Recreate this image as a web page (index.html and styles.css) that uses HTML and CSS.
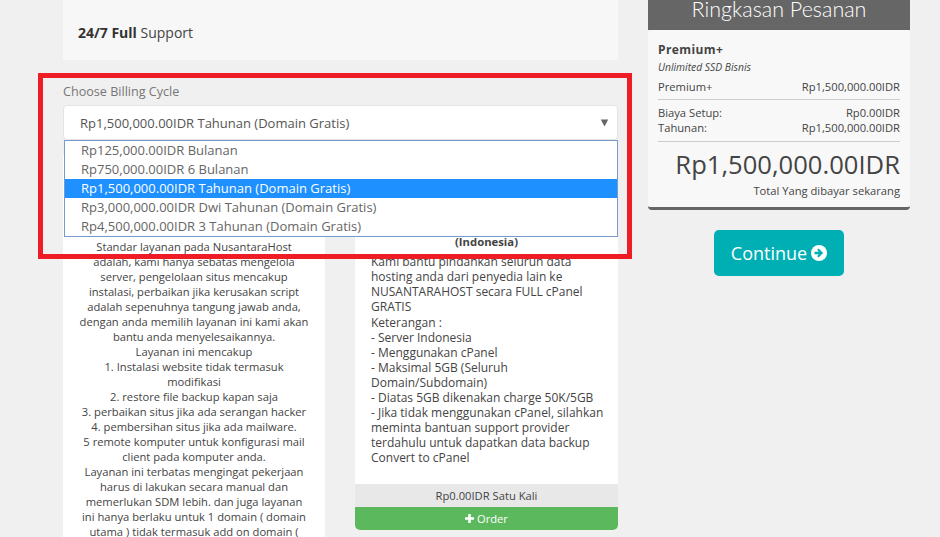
FILE: index.html
```html
<!DOCTYPE html>
<html lang="id">
<head>
<meta charset="utf-8">
<title>Ringkasan Pesanan</title>
<link rel="stylesheet" href="styles.css">
</head>
<body>
<div class="page">
  <main class="main">
    <div class="feature"><b>24/7 Full</b> Support</div>
    <div class="billing">
      <label class="label">Choose Billing Cycle</label>
      <div class="select">
        <span>Rp1,500,000.00IDR Tahunan (Domain Gratis)</span>
        <svg class="caret" width="9" height="8" viewBox="0 0 9 8"><polygon points="0.8,0.5 8.2,0.5 4.5,7.5" fill="#666"/></svg>
        <ul class="options">
          <li>Rp125,000.00IDR Bulanan</li>
          <li>Rp750,000.00IDR 6 Bulanan</li>
          <li class="selected">Rp1,500,000.00IDR Tahunan (Domain Gratis)</li>
          <li>Rp3,000,000.00IDR Dwi Tahunan (Domain Gratis)</li>
          <li>Rp4,500,000.00IDR 3 Tahunan (Domain Gratis)</li>
        </ul>
      </div>
    </div>
    <div class="addons">
      <section class="card card-left">
        <p>Standar layanan pada NusantaraHost<br>adalah, kami hanya sebatas mengelola<br>server, pengelolaan situs mencakup<br>instalasi, perbaikan jika kerusakan script<br>adalah sepenuhnya tangung jawab anda,<br>dengan anda memilih layanan ini kami akan<br>bantu anda menyelesaikannya.<br>Layanan ini mencakup<br>1. Instalasi website tidak termasuk<br>modifikasi<br>2. restore file backup kapan saja<br>3. perbaikan situs jika ada serangan hacker<br>4. pembersihan situs jika ada mailware.<br>5 remote komputer untuk konfigurasi mail<br>client pada komputer anda.<br>Layanan ini terbatas mengingat pekerjaan<br>harus di lakukan secara manual dan<br>memerlukan SDM lebih. dan juga layanan<br>ini hanya berlaku untuk 1 domain ( domain<br>utama ) tidak termasuk add on domain (</p>
      </section>
      <section class="card card-right">
        <h3>(Indonesia)</h3>
        <p class="intro">Kami bantu pindahkan seluruh data<br>hosting anda dari penyedia lain ke<br>NUSANTARAHOST secara FULL cPanel<br>GRATIS</p>
        <p>Keterangan :<br>- Server Indonesia<br>- Menggunakan cPanel<br>- Maksimal 5GB (Seluruh<br>Domain/Subdomain)<br>- Diatas 5GB dikenakan charge 50K/5GB<br>- Jika tidak menggunakan cPanel, silahkan<br>meminta bantuan support provider<br>terdahulu untuk dapatkan data backup<br>Convert to cPanel</p>
        <div class="price">Rp0.00IDR Satu Kali</div>
        <div class="order">
          <svg width="9" height="9" viewBox="0 0 9 9"><path d="M3.200 0h2.600v3.200H9v2.600H5.800V9H3.200V5.800H0V3.200h3.200z" fill="#fff"/></svg>
          Order
        </div>
      </section>
    </div>
  </main>
  <aside class="side">
    <h2 class="side-title">Ringkasan Pesanan</h2>
    <div class="summary">
      <div class="product">Premium+</div>
      <div class="group">Unlimited SSD Bisnis</div>
      <div class="row"><span>Premium+</span><span>Rp1,500,000.00IDR</span></div>
      <div class="totals">
        <div class="row"><span>Biaya Setup:</span><span>Rp0.00IDR</span></div>
        <div class="row"><span>Tahunan:</span><span>Rp1,500,000.00IDR</span></div>
      </div>
      <div class="total">Rp1,500,000.00IDR</div>
      <div class="total-note">Total Yang dibayar sekarang</div>
    </div>
    <div class="actions">
      <a class="continue">Continue
        <svg width="16" height="16" viewBox="0 0 16 16"><circle cx="8" cy="8" r="8" fill="#fff"/><path d="M3.500 6.700h4.300L6.100 5l1.500-1.500L12.100 8l-4.500 4.500L6.100 11l1.700-1.700H3.500z" fill="#00afb4"/></svg>
      </a>
    </div>
  </aside>
</div>
<div class="highlight"></div>
</body>
</html>
```

FILE: styles.css
```css
* { box-sizing: border-box; }
html, body { margin: 0; height: 537px; overflow: hidden; }
body {
  background: #f0f0f0;
  font-family: "Open Sans", sans-serif;
  color: #333;
  position: relative;
}
.page {
  display: flex;
  align-items: flex-start;
  gap: 30px;
  padding-left: 63px;
}
.main { width: 555px; flex: none; }
.side { width: 262px; flex: none; }

.feature {
  height: 60px;
  background: #f7f7f7;
  padding: 24px 15px 0;
  font-size: 14px;
  line-height: 18px;
  color: #444;
}
.feature b { color: #333; }

.billing { margin-top: 21px; }
.label {
  display: block;
  font-size: 12.6px;
  line-height: 20px;
  color: #777;
  padding-top: 1px;
  margin-bottom: 3px;
}
.select {
  position: relative;
  height: 35px;
  background: #fff;
  border: 1px solid #e4e4e4;
  border-radius: 4px;
  padding: 0 16px;
  display: flex;
  align-items: center;
  justify-content: space-between;
  font-size: 13px;
  color: #555;
}
.caret { margin-right: -8px; }
.options {
  position: absolute;
  z-index: 2;
  left: 0;
  right: -1px;
  top: 34px;
  margin: 0;
  padding: 0;
  list-style: none;
  background: #fff;
  border: 1px solid #7799cc;
  font-size: 13px;
  line-height: 19px;
  color: #666;
}
.options li { padding-left: 16px; height: 19px; white-space: nowrap; }
.options .selected { background: #1e90ff; color: #fff; }

.addons {
  display: flex;
  gap: 30px;
  margin-top: 15px;
  align-items: flex-start;
}
.card {
  background: #fff;
  font-size: 12px;
  line-height: 15px;
  color: #444;
}
.card p { margin: 0; }
.card-left {
  width: 262px;
  flex: none;
  text-align: center;
  padding-top: 84px;
  height: 400px;
  font-size: 11.2px;
  white-space: nowrap;
}
.card-right {
  width: 263px;
  flex: none;
  padding-top: 79px;
  border-radius: 0 0 5px 5px;
  overflow: hidden;
}
.card-right h3 {
  margin: 0 0 5px;
  font-size: 11.3px;
  line-height: 15px;
  text-align: center;
  color: #444;
}
.card-right p { padding: 0 16px; white-space: nowrap; }
.card-right .intro { margin-bottom: 1px; }
.price {
  margin-top: 19px;
  height: 23px;
  background: #e8e8e8;
  text-align: center;
  font-size: 11.2px;
  line-height: 23px;
}
.order {
  height: 23px;
  background: #5cb85c;
  color: #fff;
  text-align: center;
  font-size: 11.2px;
  line-height: 23px;
}

.side-title {
  margin: 0;
  height: 30px;
  overflow: hidden;
  background: #666;
  color: #fff;
  text-align: center;
  font-family: Lato, sans-serif;
  font-weight: 300;
  font-size: 21.5px;
  line-height: 18px;
}
.summary {
  background: #f8f8f8;
  border-bottom: 3px solid #666;
  border-radius: 4px;
  height: 180px;
  padding: 12px 10px 0;
  font-size: 11.2px;
  color: #444;
}
.product { font-size: 12px; font-weight: 700; line-height: 16px; letter-spacing: 0.4px; }
.group { font-style: italic; font-size: 10.3px; line-height: 18px; margin-bottom: 3px; }
.row { display: flex; justify-content: space-between; line-height: 15px; }
.totals {
  margin-top: 5px;
  padding: 5px 0 6px;
  border-top: 1px solid #ccc;
  border-bottom: 1px solid #ccc;
}
.total { font-size: 25.6px; line-height: 36px; margin-top: 5px; text-align: right; }
.total-note { text-align: right; font-size: 11.2px; line-height: 15px; }

.actions { display: flex; justify-content: center; margin-top: 20px; }
.continue {
  display: flex;
  align-items: center;
  justify-content: center;
  gap: 4px;
  width: 130px;
  height: 46px;
  border-radius: 5px;
  background: #00afb4;
  color: #fff;
  font-size: 18px;
}

.highlight {
  position: absolute;
  z-index: 3;
  left: 38px;
  top: 73px;
  width: 594px;
  height: 186px;
  border: 5px solid #ee1c25;
}
```
